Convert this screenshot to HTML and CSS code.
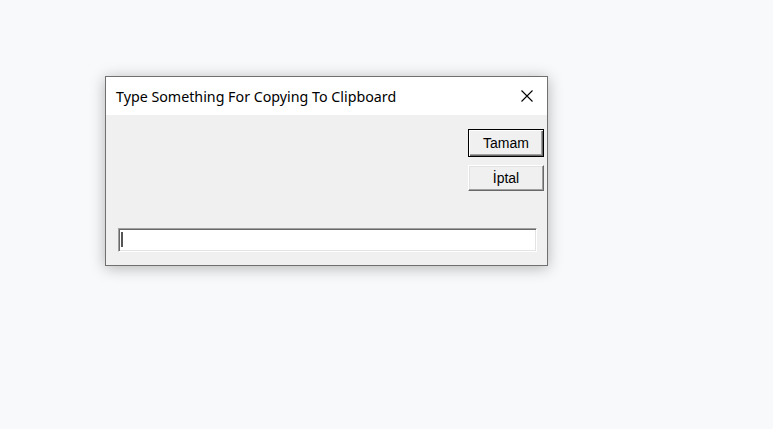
FILE: index.html
```html
<!DOCTYPE html>
<html lang="tr">
<head>
<meta charset="utf-8">
<title>Clipboard</title>
<link rel="stylesheet" href="styles.css">
</head>
<body>
<div class="window">
  <div class="titlebar">
    <span class="title">Type Something For Copying To Clipboard</span>
    <span class="close" aria-label="Kapat">
      <svg width="12" height="12" viewBox="0 0 12 12"><path d="M0.5 0.5 L11.5 11.5 M11.5 0.5 L0.5 11.5" stroke="#000" stroke-width="1.1" fill="none"/></svg>
    </span>
  </div>
  <div class="dlg-body">
    <div class="actions">
      <button class="btn btn-default">Tamam</button>
      <button class="btn">İptal</button>
    </div>
    <div class="textbox"><span class="caret"></span></div>
  </div>
</div>
</body>
</html>
```
FILE: styles.css
```css
html, body {
  margin: 0;
  padding: 0;
}
body {
  background: #f8f9fa;
  width: 773px;
  height: 429px;
  overflow: hidden;
}
.window {
  margin: 76px 0 0 105px;
  width: 443px;
  height: 190px;
  box-sizing: border-box;
  border: 1px solid #707070;
  background: #f0f0f0;
  box-shadow: 0 2px 14px rgba(0, 0, 0, 0.28);
  display: flex;
  flex-direction: column;
}
.titlebar {
  height: 38px;
  background: #fff;
  display: flex;
  align-items: center;
  justify-content: space-between;
  padding: 0 14px 0 10px;
}
.title {
  font-family: "Noto Sans", "Open Sans", sans-serif;
  font-size: 14.25px;
  color: #000;
  white-space: nowrap;
}
.close {
  display: flex;
  width: 12px;
  height: 12px;
}
.dlg-body {
  flex: 1;
  display: flex;
  flex-direction: column;
  padding: 14px 3px 13px 12px;
}
.actions {
  display: flex;
  flex-direction: column;
  align-items: flex-end;
  gap: 8px;
}
.btn {
  font-family: "Liberation Sans", Arial, sans-serif;
  font-size: 14px;
  color: #000;
  width: 76px;
  height: 26px;
  margin: 0;
  padding: 0;
  background: #f0f0f0;
  border: 1px solid;
  border-color: #fff #696969 #696969 #fff;
  box-shadow: inset -1px -1px 0 #a0a0a0, inset 1px 1px 0 #e3e3e3;
  box-sizing: border-box;
}
.btn-default {
  height: 28px;
  border: 1px solid #000;
  box-shadow: inset 1px 1px 0 #fff, inset -1px -1px 0 #696969, inset -2px -2px 0 #a0a0a0;
}
.textbox {
  margin-top: auto;
  width: 419px;
  height: 24px;
  box-sizing: border-box;
  background: #fff;
  border: 1px solid;
  border-color: #a0a0a0 #fff #fff #a0a0a0;
  box-shadow: inset 1px 1px 0 #696969, inset -1px -1px 0 #e3e3e3;
  padding: 3px 0 0 2px;
}
.caret {
  display: block;
  width: 2px;
  height: 15px;
  background: #555;
}
```
